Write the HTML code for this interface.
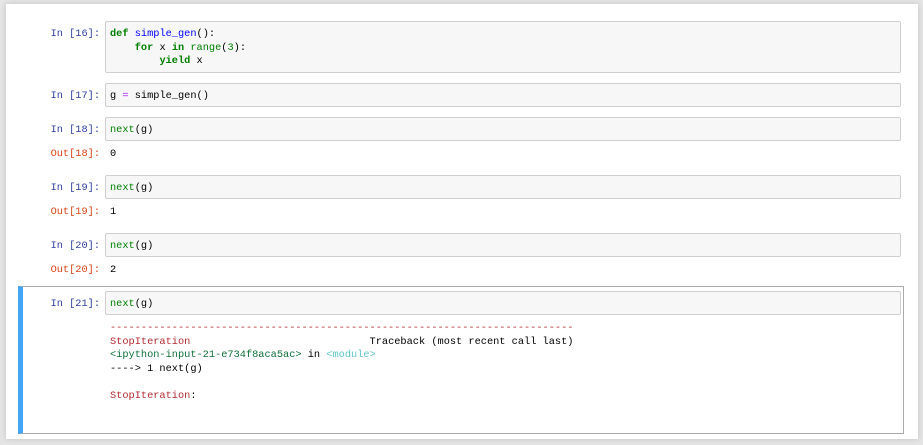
<!DOCTYPE html>
<html><head><style>
html,body{margin:0;padding:0;}
body{width:923px;height:445px;background:#e5e5e5;position:relative;overflow:hidden;font-family:"Liberation Mono",monospace;font-size:10.3px;}
.panel{position:absolute;left:6px;top:4px;width:912px;height:435px;background:#fff;box-shadow:0 0 6px rgba(0,0,0,.15);}
.box{position:absolute;left:105px;width:794px;background:#f7f7f7;border:1px solid #cfcfcf;border-radius:2px;}
.t{position:absolute;white-space:pre;line-height:13.5px;}
.in{color:#303f9f;right:823px;text-align:right;}
.out{color:#d84315;right:823px;text-align:right;}
.c{left:110px;color:#000;}
.k{color:#008000;font-weight:bold;}
.b{color:#008000;}
.f{color:#0000ff;}
.o{color:#aa22ff;}
.n{color:#008000;}
.r{color:#b22b31;}
.g{color:#10703a;}
.cy{color:#60c6c8;}
.sel{position:absolute;left:18px;top:286px;width:886px;height:148px;border:1px solid #ababab;border-left:5px solid #42a5f5;box-sizing:border-box;}
</style></head><body>
<div class="panel"></div>
<div class="box" style="top:21px;height:50px"></div>
<div class="t in" style="top:28px">In [16]:</div>
<div class="t c" style="top:28px"><span class="k">def</span> <span class="f">simple_gen</span>():
    <span class="k">for</span> x <span class="k">in</span> <span class="b">range</span>(<span class="n">3</span>):
        <span class="k">yield</span> x</div>

<div class="box" style="top:83px;height:22px"></div>
<div class="t in" style="top:90px">In [17]:</div>
<div class="t c" style="top:90px">g <span class="o">=</span> simple_gen()</div>

<div class="box" style="top:117px;height:22px"></div>
<div class="t in" style="top:124px">In [18]:</div>
<div class="t c" style="top:124px"><span class="b">next</span>(g)</div>
<div class="t out" style="top:148px">Out[18]:</div>
<div class="t c" style="top:148px">0</div>

<div class="box" style="top:175px;height:22px"></div>
<div class="t in" style="top:182px">In [19]:</div>
<div class="t c" style="top:182px"><span class="b">next</span>(g)</div>
<div class="t out" style="top:206px">Out[19]:</div>
<div class="t c" style="top:206px">1</div>

<div class="box" style="top:233px;height:22px"></div>
<div class="t in" style="top:240px">In [20]:</div>
<div class="t c" style="top:240px"><span class="b">next</span>(g)</div>
<div class="t out" style="top:264px">Out[20]:</div>
<div class="t c" style="top:264px">2</div>

<div class="sel"></div>
<div class="box" style="top:291px;height:22px"></div>
<div class="t in" style="top:298px">In [21]:</div>
<div class="t c" style="top:298px"><span class="b">next</span>(g)</div>
<div class="t c" style="top:322px"><span class="r">---------------------------------------------------------------------------</span>
<span class="r">StopIteration</span>                             Traceback (most recent call last)
<span class="g">&lt;ipython-input-21-e734f8aca5ac&gt;</span> in <span class="cy">&lt;module&gt;</span>
----&gt; 1 next(g)

<span class="r">StopIteration</span>: </div>
</body></html>
